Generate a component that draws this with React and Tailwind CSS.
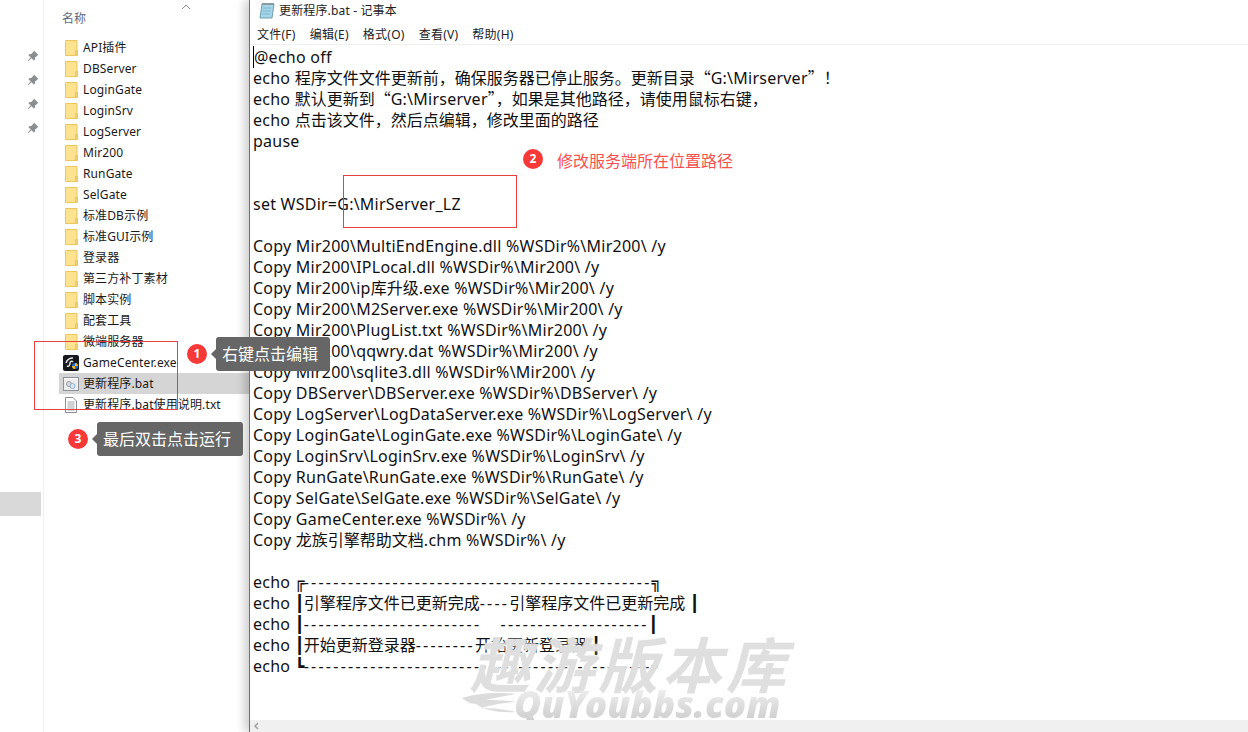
import React from "react";

const folders = [
  "API插件",
  "DBServer",
  "LoginGate",
  "LoginSrv",
  "LogServer",
  "Mir200",
  "RunGate",
  "SelGate",
  "标准DB示例",
  "标准GUI示例",
  "登录器",
  "第三方补丁素材",
  "脚本实例",
  "配套工具",
  "微端服务器",
];

const copyLines = [
  "Copy Mir200\\MultiEndEngine.dll %WSDir%\\Mir200\\ /y",
  "Copy Mir200\\IPLocal.dll %WSDir%\\Mir200\\ /y",
  "Copy Mir200\\ip库升级.exe %WSDir%\\Mir200\\ /y",
  "Copy Mir200\\M2Server.exe %WSDir%\\Mir200\\ /y",
  "Copy Mir200\\PlugList.txt %WSDir%\\Mir200\\ /y",
  "Copy Mir200\\qqwry.dat %WSDir%\\Mir200\\ /y",
  "Copy Mir200\\sqlite3.dll %WSDir%\\Mir200\\ /y",
  "Copy DBServer\\DBServer.exe %WSDir%\\DBServer\\ /y",
  "Copy LogServer\\LogDataServer.exe %WSDir%\\LogServer\\ /y",
  "Copy LoginGate\\LoginGate.exe %WSDir%\\LoginGate\\ /y",
  "Copy LoginSrv\\LoginSrv.exe %WSDir%\\LoginSrv\\ /y",
  "Copy RunGate\\RunGate.exe %WSDir%\\RunGate\\ /y",
  "Copy SelGate\\SelGate.exe %WSDir%\\SelGate\\ /y",
  "Copy GameCenter.exe %WSDir%\\ /y",
  "Copy 龙族引擎帮助文档.chm %WSDir%\\ /y",
];

const FolderIcon = () => (
  <svg width="13" height="16" viewBox="0 0 13 16" className="shrink-0">
    <path d="M.5.5h11.5v15H.5z" fill="#fde28f" stroke="#eac65c" />
    <path d="M10.5 15.5v-5h2v5z" fill="#f5d26e" stroke="#eac65c" />
  </svg>
);

const Pin = () => (
  <svg width="12" height="12" viewBox="0 0 12 12" className="block">
    <path d="M7 .5l4.5 4.5-1.2.6-2.3 2.2-.2 2.2-1 .5L4.5 8.2 1 11.5.5 11l3.3-3.5L1.5 5.2l.5-1 2.2-.2 2.2-2.3z" fill="#8a8f94" />
  </svg>
);

const Row = ({ icon, label, selected }) => (
  <div className={`flex items-center h-[21px] pl-[4px] ${selected ? "bg-[#d5d5d5]" : ""}`}>
    <div className="w-[16px] flex justify-center shrink-0">{icon}</div>
    <span className="text-[12px] text-[#1a1a1a] ml-[4px] tracking-[0.12px] whitespace-nowrap">{label}</span>
  </div>
);

const GameIcon = () => (
  <svg width="16" height="16" viewBox="0 0 16 16" className="shrink-0">
    <rect width="16" height="16" rx="2" fill="#17191d" />
    <path d="M3 8c1-3 3-5 7-5M4 11c2 1 3-1 3-3s2-2 3-1" stroke="#e8e8e8" strokeWidth="1.5" fill="none" />
    <circle cx="12" cy="11" r="3" fill="#2f6fd0" />
    <path d="M12 8v3h3a3 3 0 0 0-3-3zM12 11H9a3 3 0 0 0 3 3z" fill="#f0b428" />
  </svg>
);

const BatIcon = () => (
  <svg width="16" height="14" viewBox="0 0 16 14" className="shrink-0">
    <rect x=".5" y=".5" width="15" height="13" fill="#ececec" stroke="#8c9298" />
    <rect x="1" y="1" width="14" height="1.5" fill="#fafafa" />
    <circle cx="6" cy="7" r="2.5" fill="#dcdcdc" stroke="#9a9ea3" />
    <circle cx="9.5" cy="9" r="2.5" fill="#dce6ee" stroke="#8fb0cc" />
  </svg>
);

const TxtIcon = () => (
  <svg width="12" height="16" viewBox="0 0 12 16" className="shrink-0">
    <path d="M.5.5h7.5l3.5 3.5v11.5H.5z" fill="#fff" stroke="#8c9095" />
    <path d="M2.5 5h7M2.5 7h7M2.5 9h7M2.5 11h7M2.5 13h7" stroke="#a0a4a8" />
  </svg>
);

const NotepadIcon = () => (
  <svg width="16" height="17" viewBox="0 0 16 17" className="shrink-0">
    <path d="M3 2h12l-2 14H1z" fill="#a5d5e8" stroke="#6f9db2" />
    <path d="M3 1h12v2H3z" fill="#8a9aa3" />
    <path d="M4 6h8M3.6 9h8M3.2 12h8" stroke="#7fb6cd" />
  </svg>
);

const Badge = ({ n }) => (
  <span className="flex items-center justify-center w-5 h-5 rounded-full bg-[#f93838] text-white text-[12px] font-bold shrink-0">
    {n}
  </span>
);

const Tip = ({ children, className }) => (
  <div className={`absolute flex items-center h-[34px] pl-[6px] pr-[12px] rounded-[3px] bg-[#666666] text-white text-[16px] tracking-normal whitespace-nowrap ${className}`}>
    <span className="absolute left-[-5px] top-[12px] w-0 h-0 border-y-[5px] border-y-transparent border-r-[5px] border-r-[#666666]" />
    {children}
  </div>
);

// cjk runs (and the curly quotes) take the CJK face with no extra tracking
const Mixed = ({ text }) =>
  text.split(/([\u2e80-\uffef“”]+)/).map((part, i) =>
    i % 2 === 1 ? (
      <span key={i} className="font-['Noto_Sans_CJK_SC'] tracking-normal leading-[0]">
        {part}
      </span>
    ) : (
      part
    ),
  );

const Line = ({ children }) => <div className="h-[21px] leading-[21px] whitespace-pre">{children}</div>;

// hyphens in the box drawing run wider than the text face gives
const Dash = ({ children }) => <span className="tracking-[2.25px]">{children}</span>;

const Bar = ({ children }) => (
  <span className="inline-block w-[9px] font-['DejaVu_Sans_Mono'] tracking-normal leading-[0]">{children}</span>
);

export default function App() {
  return (
    <div
      className="relative w-[1248px] h-[732px] overflow-hidden bg-white flex"
      style={{ fontFamily: '"Noto Sans", "Noto Sans CJK SC", sans-serif' }}
    >
      {/* quick access strip */}
      <div className="w-[44px] shrink-0 border-r border-[#f0f0f0] relative flex flex-col">
        <div className="flex flex-col items-end gap-[12px] pr-[4px] pt-[50px]">
          <Pin />
          <Pin />
          <Pin />
          <Pin />
        </div>
        <div className="mt-[358px] w-[41px] h-[24px] bg-[#d9d9d9]" />
      </div>

      {/* file list */}
      <div className="w-[205px] shrink-0 relative">
        <div className="text-[12px] text-[#5f6b7a] pl-[18px] pt-[10px] h-[37px]">名称</div>
        <svg width="10" height="6" viewBox="0 0 10 6" className="absolute left-[137px] top-[4px]">
          <path d="M1 5l4-4 4 4" fill="none" stroke="#8a8a8a" />
        </svg>
        <div className="pl-[15px]">
          {folders.map((f) => (
            <Row key={f} icon={<FolderIcon />} label={f} />
          ))}
          <Row icon={<GameIcon />} label="GameCenter.exe" />
          <Row icon={<BatIcon />} label="更新程序.bat" selected />
          <Row icon={<TxtIcon />} label="更新程序.bat使用说明.txt" />
        </div>
      </div>

      {/* notepad window */}
      <div className="flex-1 min-w-0 flex flex-col border-l border-[#6f6f6f] shadow-[-5px_0_8px_rgba(0,0,0,0.18)] bg-white z-10">
        <div className="h-[21px] flex items-center pl-[9px] gap-[4px] text-[12px] text-[#222] tracking-[0.15px]">
          <NotepadIcon />
          <span>更新程序.bat - 记事本</span>
        </div>
        <div className="h-[24px] flex items-center pl-[7px] pt-[5px] gap-[14px] text-[12px] text-[#222] tracking-[0.25px] border-b border-[#f0f0f0]">
          <span>文件(F)</span>
          <span>编辑(E)</span>
          <span>格式(O)</span>
          <span>查看(V)</span>
          <span>帮助(H)</span>
        </div>
        <div className="flex-1 min-h-0 pl-[3px] pt-[2px] text-[16px] tracking-[0.24px] text-[#111] overflow-hidden">
          <Line>
            <span className="border-l border-black">@echo off</span>
          </Line>
          <Line><Mixed text="echo 程序文件文件更新前，确保服务器已停止服务。更新目录“G:\Mirserver”！" /></Line>
          <Line><Mixed text="echo 默认更新到“G:\Mirserver”，如果是其他路径，请使用鼠标右键，" /></Line>
          <Line><Mixed text="echo 点击该文件，然后点编辑，修改里面的路径" /></Line>
          <Line>pause</Line>
          <Line> </Line>
          <Line> </Line>
          <Line>set WSDir=G:\MirServer_LZ</Line>
          <Line> </Line>
          {copyLines.map((l) => (
            <Line key={l}><Mixed text={l} /></Line>
          ))}
          <Line> </Line>
          <Line>echo <Bar>╔</Bar><Dash>-----------------------------------------------</Dash><Bar>╗</Bar></Line>
          <Line>echo <Bar>┃</Bar><Mixed text="引擎程序文件已更新完成" /><Dash>----</Dash><Mixed text="引擎程序文件已更新完成" /> <Bar>┃</Bar></Line>
          <Line>echo <Bar>┃</Bar><Dash>------------------------   --------------------</Dash><Bar>┃</Bar></Line>
          <Line>echo <Bar>┃</Bar><Mixed text="开始更新登录器" /><Dash>--------</Dash><Mixed text="开始更新登录器" /> <Bar>┃</Bar></Line>
          <Line>echo <Bar>┗</Bar><Dash>-----------------------------------------------</Dash><Bar>┛</Bar></Line>
        </div>
        <div className="h-[12px] bg-[#f0f0f0] flex items-center pl-[3px] shrink-0">
          <svg width="6" height="8" viewBox="0 0 6 8">
            <path d="M5 1L2 4l3 3" fill="none" stroke="#a0a0a0" strokeWidth="1.5" />
          </svg>
        </div>
      </div>

      {/* annotations */}
      <div className="absolute z-20 left-[34px] top-[341px] w-[144px] h-[69px] border border-[#e84040]" />
      <div className="absolute z-20 left-[343px] top-[175px] w-[174px] h-[53px] border border-[#e84040]" />

      <div className="absolute z-20 left-[187px] top-[344px]">
        <Badge n="1" />
      </div>
      <Tip className="z-20 left-[216px] top-[337px]">右键点击编辑</Tip>

      <div className="absolute z-20 left-[523px] top-[149px]">
        <Badge n="2" />
      </div>
      <div className="absolute z-20 left-[557px] top-[151px] text-[16px] leading-[20px] text-[#f95050]">修改服务端所在位置路径</div>

      <div className="absolute z-20 left-[68px] top-[429px]">
        <Badge n="3" />
      </div>
      <Tip className="z-20 left-[97px] top-[422px]">最后双击点击运行</Tip>

      {/* watermark */}
      <div className="absolute z-20 left-[470px] top-[632px] text-[60px] leading-[66px] italic font-bold text-[#dcdcdc]/90 tracking-[4px] whitespace-nowrap [text-shadow:0_0_3px_white]">
        趣游版本库
      </div>
      <svg width="54" height="24" viewBox="0 0 54 24" className="absolute z-20 left-[462px] top-[692px]">
        <path d="M0 6c16-5 34-6 54-4-12 2-22 4-30 6 10 0 20 0 30 2-14 1-26 3-34 6 10 0 22 1 34 4-18 1-32-2-40-8-6 0-10-3-14-6z" fill="#dcdcdc" />
      </svg>
      <div className="absolute z-20 left-[514px] top-[688px] text-[37px] leading-[32px] italic font-black bg-gradient-to-b from-[#efefef] to-[#cfcfcf] bg-clip-text text-transparent whitespace-nowrap">
        QuYoubbs.com
      </div>
    </div>
  );
}
